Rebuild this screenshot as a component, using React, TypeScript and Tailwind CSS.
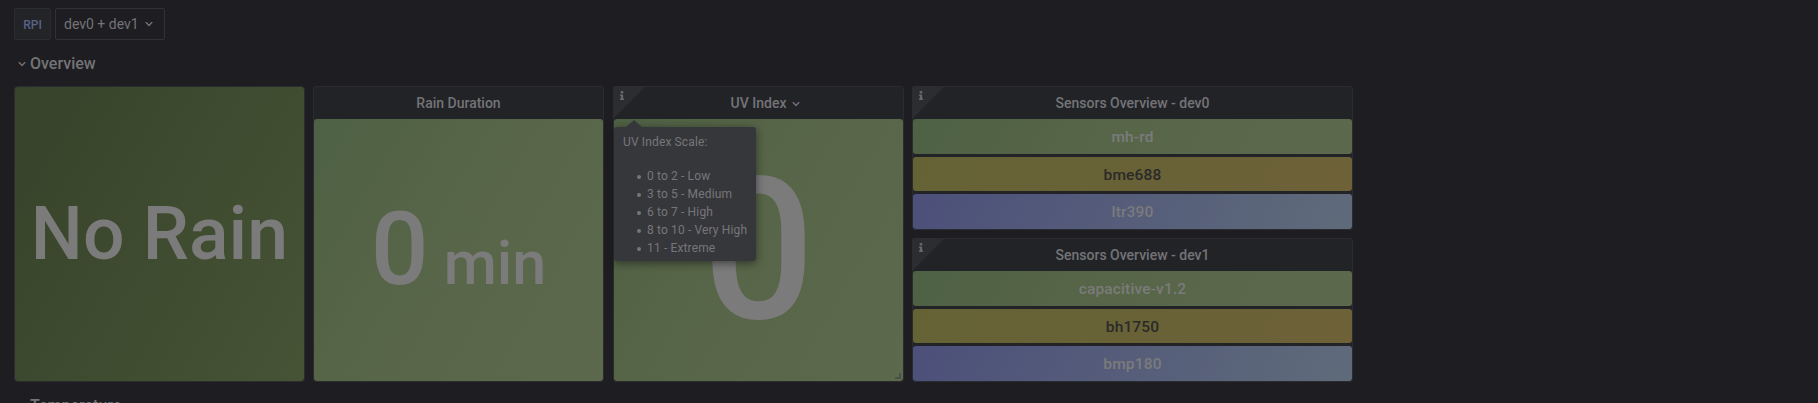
import type { ReactNode } from "react";

const GREEN = "bg-[linear-gradient(120deg,#4e6144,#566447_35%,#5c694c)]";
const YELLOW = "bg-[linear-gradient(120deg,#656336,#6a6137_70%,#6e6138)]";
const BLUE = "bg-[linear-gradient(120deg,#4c507a,#5f6b7a)]";

function Chevron({ className = "" }: { className?: string }) {
  return (
    <svg viewBox="0 0 24 24" fill="currentColor" className={`size-4 shrink-0 ${className}`}>
      <path d="M17 9.17a1 1 0 0 0-1.41 0L12 12.71 8.46 9.17a1 1 0 0 0-1.41 0 1 1 0 0 0 0 1.42l4.24 4.24a1 1 0 0 0 1.42 0L17 10.59a1 1 0 0 0 0-1.42Z" />
    </svg>
  );
}

function InfoCorner() {
  return (
    <div className="absolute -left-px -top-px h-[33px] w-[33px]">
      <svg viewBox="0 0 33 33" className="absolute inset-0 size-full">
        <path d="M2 0H33L0 33V2Q0 0 2 0Z" fill="#2c2d31" />
      </svg>
      <svg viewBox="0 0 192 512" fill="#68686c" className="absolute left-[7px] top-[5px] h-[9px] w-[4px]" preserveAspectRatio="none">
        <path d="M20 424.2h20V279.800H20c-11 0-20-8.900-20-20V212c0-11 9-20 20-20h112c11 0 20 9 20 20v212.200h20c11 0 20 9 20 20V492c0 11-9 20-20 20H20c-11 0-20-9-20-20v-47.800c0-11 9-20 20-20zM96 0C56.200 0 24 32.200 24 72s32.200 72 72 72 72-32.200 72-72S135.800 0 96 0z" />
      </svg>
    </div>
  );
}

function Panel({
  title,
  info,
  menu,
  className = "",
  children,
}: {
  title?: string;
  info?: boolean;
  menu?: boolean;
  className?: string;
  children: ReactNode;
}) {
  return (
    <section className={`relative flex flex-col rounded-[3px] border border-[#2b2c30] bg-[#222327] ${className}`}>
      {info && <InfoCorner />}
      {title && (
        <header className="relative flex h-8 shrink-0 items-center justify-center text-sm font-medium text-[#747477]">
          <span>{title}</span>
          {menu && <Chevron className="ml-[2px] mt-[2px] -mr-[18px]" />}
        </header>
      )}
      {children}
    </section>
  );
}

function SensorBars({ names }: { names: [string, string, string] }) {
  return (
    <div className="flex flex-1 flex-col gap-[3px] text-[15.5px] font-medium leading-none tracking-[0.15px]">
      <div className={`flex h-[35px] items-center justify-center rounded-[3px] pt-[2px] text-[#7a7b7b] ${GREEN}`}>{names[0]}</div>
      <div className={`flex h-[34px] items-center justify-center rounded-[3px] pt-[3px] text-[#2a2a29] ${YELLOW}`}>{names[1]}</div>
      <div className={`flex h-[35px] items-center justify-center rounded-[3px] pt-[2px] text-[#7a7b7b] ${BLUE}`}>{names[2]}</div>
    </div>
  );
}

function RowTitle({ children }: { children: ReactNode }) {
  return (
    <div className="flex h-6 items-center pl-[14px] text-base font-medium text-[#747477]">
      <Chevron className="-mt-px" />
      <span>{children}</span>
    </div>
  );
}

const UV_SCALE = ["0 to 2 - Low", "3 to 5 - Medium", "6 to 7 - High", "8 to 10 - Very High", "11 - Extreme"];

export default function App() {
  return (
    <div className="h-[403px] w-[1818px] overflow-hidden bg-[#1e1d21] font-[Roboto,sans-serif] text-[#747477]">
      <div className="flex gap-1 pl-[14px] pt-2">
        <div className="flex h-8 w-[37px] items-center justify-center rounded-[2px] border border-[#2b2c30] bg-[#222428] pt-px text-xs font-medium text-[#5a6286]">
          RPI
        </div>
        <div className="flex h-8 w-[110px] items-center rounded-[2px] border border-[#323236] pl-2 text-sm">
          <span>dev0 + dev1</span>
          <Chevron className="ml-[2px]" />
        </div>
      </div>
      <div className="pt-3">
        <RowTitle>Overview</RowTitle>
      </div>
      <main className="flex pl-[14px] pt-[10px]">
        <Panel className="mr-2 h-[296px] w-[291px]">
          <div className="flex flex-1 items-center justify-center rounded-[3px] bg-[linear-gradient(120deg,#37432a,#465335)] pt-[2px] text-[73.4px] font-medium leading-none text-[#7b7b7b]">
            <span>No Rain</span>
          </div>
        </Panel>
        <Panel title="Rain Duration" className="mr-[9px] h-[296px] w-[291px]">
          <div className={`flex flex-1 items-baseline justify-center rounded-[3px] pt-[70px] font-medium leading-[120px] text-[#7b7b7b] ${GREEN}`}>
            <span className="text-[102px]">0</span>
            <span className="ml-[15px] text-[61px]">min</span>
          </div>
        </Panel>
        <Panel title="UV Index" info menu className="mr-2 h-[296px] w-[291px]">
          <div className={`relative flex flex-1 items-center justify-center rounded-[3px] text-[198px] font-medium leading-none text-[#7b7b7b] ${GREEN}`}>
            <span>0</span>
            <svg viewBox="0 0 6 6" className="absolute bottom-[2px] right-[2px] size-[6px]">
              <path d="M5 0V5H0" fill="none" stroke="#48504a" strokeWidth="2" />
            </svg>
          </div>
          <div className="absolute left-0 top-[40px] h-[134px] w-[142px] rounded-[3px] bg-[#36373b] pl-[9px] pt-[6px] text-xs leading-[18px] tracking-[0.14px] text-[#76767a] shadow-[0_2px_8px_rgba(20,20,22,0.6)]">
            <svg viewBox="0 0 16 7" className="absolute left-[12px] -top-[7px] h-[7px] w-4">
              <path d="M0 7 8 0 16 7Z" fill="#36373b" />
            </svg>
            <p>UV Index Scale:</p>
            <ul className="mt-4">
              {UV_SCALE.map((line) => (
                <li key={line} className="flex items-center whitespace-nowrap pl-[14px]">
                  <span className="mr-[6px] mt-px size-1 rounded-full bg-[#76767a]" />
                  {line}
                </li>
              ))}
            </ul>
          </div>
        </Panel>
        <div className="flex flex-col gap-2">
          <Panel title="Sensors Overview - dev0" info className="h-36 w-[441px]">
            <SensorBars names={["mh-rd", "bme688", "ltr390"]} />
          </Panel>
          <Panel title="Sensors Overview - dev1" info className="h-36 w-[441px]">
            <SensorBars names={["capacitive-v1.2", "bh1750", "bmp180"]} />
          </Panel>
        </div>
      </main>
      <div className="pt-3">
        <RowTitle>Temperature</RowTitle>
      </div>
    </div>
  );
}
